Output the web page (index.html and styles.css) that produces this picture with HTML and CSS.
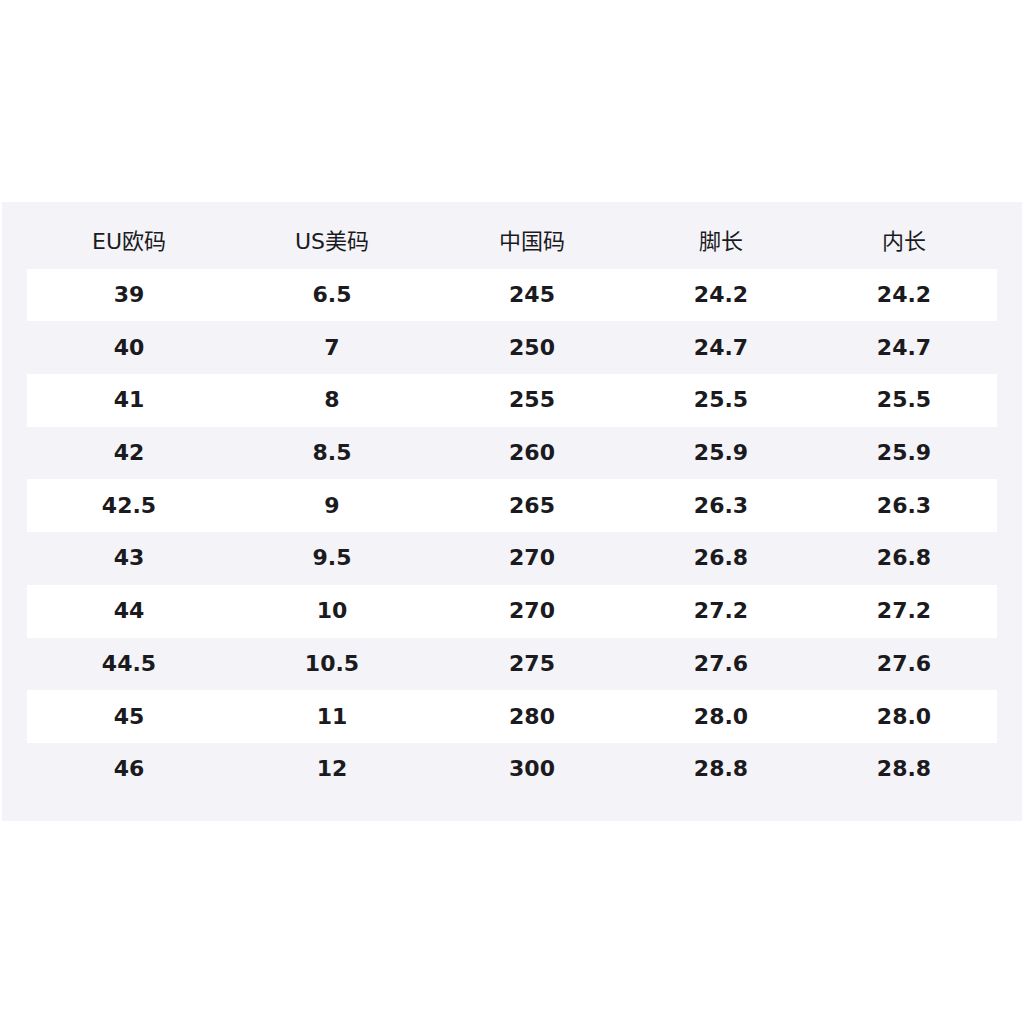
FILE: index.html
```html
<!DOCTYPE html>
<html lang="zh">
<head>
<meta charset="utf-8">
<link rel="stylesheet" href="styles.css">
</head>
<body>
<div class="panel">
  <div class="row head"><div>EU欧码</div><div>US美码</div><div>中国码</div><div>脚长</div><div>内长</div></div>
  <div class="row white"><div>39</div><div>6.5</div><div>245</div><div>24.2</div><div>24.2</div></div>
  <div class="row"><div>40</div><div>7</div><div>250</div><div>24.7</div><div>24.7</div></div>
  <div class="row white"><div>41</div><div>8</div><div>255</div><div>25.5</div><div>25.5</div></div>
  <div class="row"><div>42</div><div>8.5</div><div>260</div><div>25.9</div><div>25.9</div></div>
  <div class="row white"><div>42.5</div><div>9</div><div>265</div><div>26.3</div><div>26.3</div></div>
  <div class="row"><div>43</div><div>9.5</div><div>270</div><div>26.8</div><div>26.8</div></div>
  <div class="row white"><div>44</div><div>10</div><div>270</div><div>27.2</div><div>27.2</div></div>
  <div class="row"><div>44.5</div><div>10.5</div><div>275</div><div>27.6</div><div>27.6</div></div>
  <div class="row white"><div>45</div><div>11</div><div>280</div><div>28.0</div><div>28.0</div></div>
  <div class="row"><div>46</div><div>12</div><div>300</div><div>28.8</div><div>28.8</div></div>
</div>
</body>
</html>
```
FILE: styles.css
```css
html, body {
  margin: 0;
  padding: 0;
  background: #ffffff;
}
body {
  width: 1024px;
  height: 1024px;
  font-family: "DejaVu Sans", "Noto Sans CJK SC", sans-serif;
  color: #1b1b1f;
}
.panel {
  margin: 202px 0 0 2px;
  width: 1020px;
  box-sizing: border-box;
  padding: 14px 25px 25px 25px;
  background: #f4f4f8;
}
.row {
  display: grid;
  grid-template-columns: 204px 202px 198px 180px 186px;
  height: 52.7px;
  align-items: center;
  text-align: center;
  font-size: 22px;
  font-weight: bold;
}
.row.white {
  background: #ffffff;
}
.row.head {
  font-weight: normal;
}
.row > div {
  line-height: 1;
}
```
